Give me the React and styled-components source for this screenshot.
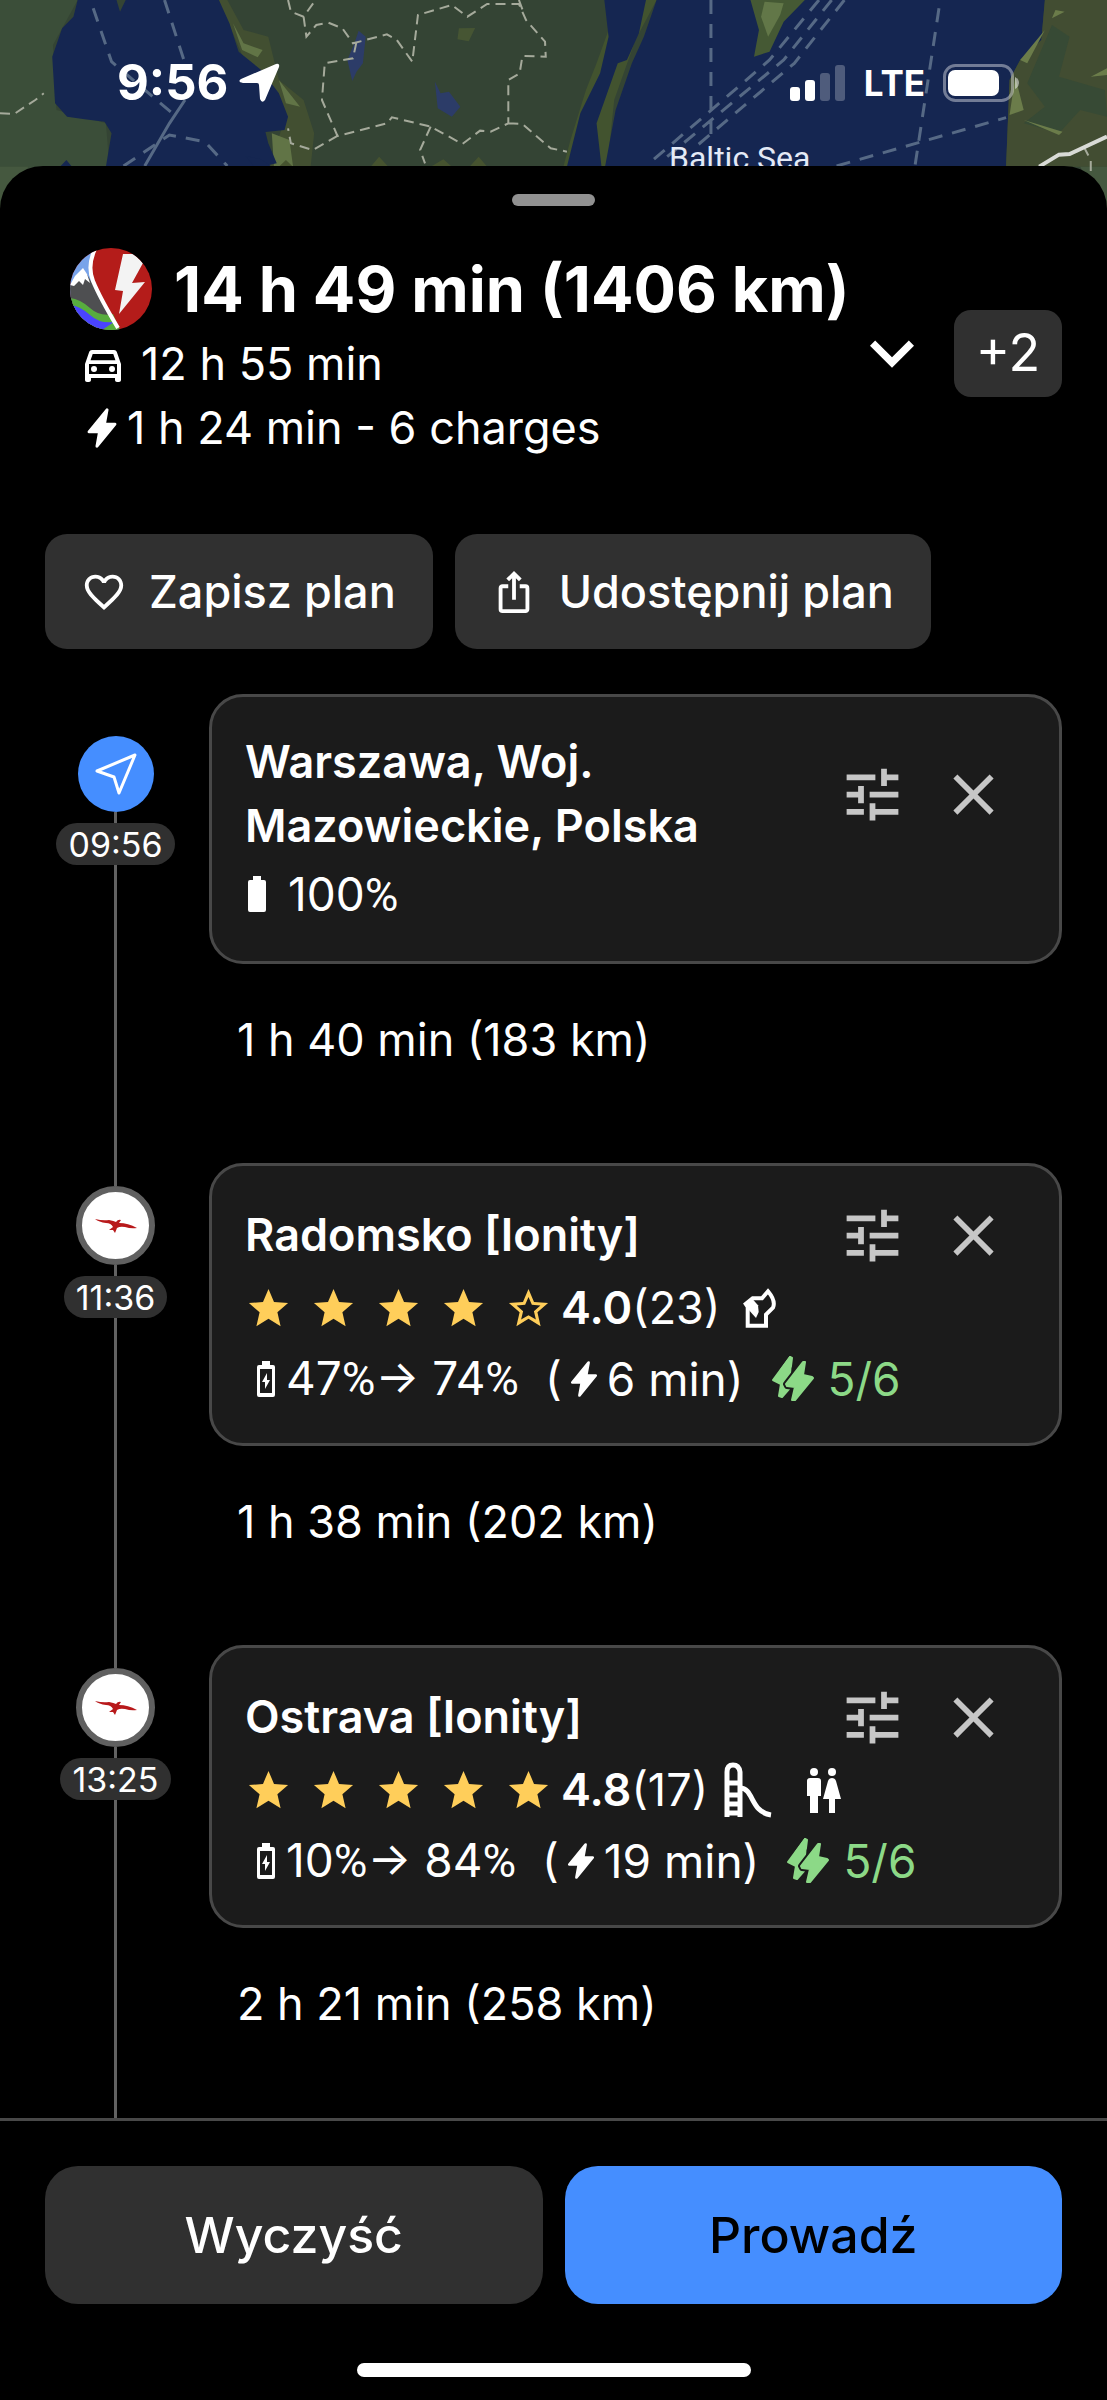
import React from 'react';
import styled, { createGlobalStyle } from 'styled-components';
import {
  MdOutlineDirectionsCar,
  MdExpandMore,
  MdFavoriteBorder,
  MdIosShare,
  MdTune,
  MdClose,
  MdStar,
  MdStarBorder,
} from 'react-icons/md';
import { IoFlash } from 'react-icons/io5';

const GlobalStyle = createGlobalStyle`
  * { box-sizing: border-box; }
  body {
    margin: 0;
    background: #000;
    color: #fff;
    font-family: Inter, "Liberation Sans", sans-serif;
    font-size: 45px;
    line-height: 64px;
  }
  button { font: inherit; color: inherit; border: 0; padding: 0; cursor: pointer; }
  svg { display: block; flex: none; }
`;

const Screen = styled.div`
  display: flex;
  flex-direction: column;
  height: 100vh;
`;

const MapArea = styled.header`
  position: relative;
  flex: none;
  height: 220px;
  background: #344434;
  overflow: hidden;
`;

const MapDrawing = styled.svg`
  width: 100%;
  height: 220px;
`;

const StatusBar = styled.div`
  position: absolute;
  inset: 0 0 auto 0;
  display: flex;
  align-items: center;
  justify-content: space-between;
  height: 166px;
  padding: 0 88px 0 117px;
`;

const StatusGroup = styled.div`
  display: flex;
  align-items: center;
  gap: ${(p) => p.$gap}px;
`;

const Clock = styled.time`
  font-size: 49px;
  font-weight: 700;
`;

const Network = styled.span`
  font-size: 35px;
  font-weight: 700;
`;

const Sheet = styled.main`
  position: relative;
  display: flex;
  flex: 1;
  flex-direction: column;
  min-height: 0;
  margin-top: -54px;
  border-radius: 43px 43px 0 0;
  background: #000;
`;

const Handle = styled.div`
  flex: none;
  width: 83px;
  height: 12px;
  margin: 28px auto 0;
  border-radius: 6px;
  background: #919191;
`;

const Summary = styled.section`
  display: flex;
  align-items: center;
  padding: 40px 45px 0 70px;
`;

const SummaryText = styled.div`
  flex: 1;
  min-width: 0;
`;

const TitleRow = styled.div`
  display: flex;
  align-items: center;
  gap: 22px;
  height: 86px;
`;

const Title = styled.h1`
  margin: 0;
  font-size: 63px;
  font-weight: 700;
  white-space: nowrap;
`;

const SummaryRow = styled.div`
  display: flex;
  align-items: center;
  gap: ${(p) => p.$gap}px;
  padding-left: ${(p) => p.$indent}px;
`;

const ExpandButton = styled.button`
  display: flex;
  flex: none;
  margin-right: 18px;
  background: none;
`;

const MoreButton = styled.button`
  flex: none;
  width: 108px;
  height: 87px;
  border-radius: 17px;
  background: #303030;
  font-size: 52px;
`;

const Actions = styled.div`
  display: flex;
  gap: 22px;
  padding: 74px 45px 45px;
`;

const ActionButton = styled.button`
  display: flex;
  align-items: center;
  gap: 22px;
  height: 115px;
  padding: 0 37px 0 36px;
  border-radius: 22px;
  background: #303030;
  font-weight: 500;
`;

const Timeline = styled.ol`
  flex: 1;
  min-height: 0;
  margin: 0;
  padding: 0 45px;
  overflow-y: auto;
  scrollbar-width: none;
  list-style: none;
`;

const Stop = styled.li`
  display: flex;
  gap: 23px;
`;

const Rail = styled.div`
  display: flex;
  flex-direction: column;
  align-items: center;
  width: 141px;
`;

const RailLine = styled.div`
  width: 3px;
  height: ${(p) => p.$height}px;
  background: ${(p) => (p.$hidden ? 'transparent' : '#626262')};
`;

const RailRest = styled(RailLine)`
  flex: 1;
`;

const StartMarker = styled.div`
  display: grid;
  place-items: center;
  width: 76px;
  height: 76px;
  border-radius: 50%;
  background: #458eff;
`;

const NetworkMarker = styled(StartMarker)`
  width: 79px;
  height: 79px;
  border: 6px solid #606060;
  background: #fff;
`;

const TimePill = styled.time`
  height: 42px;
  padding: 0 12px;
  border-radius: 21px;
  background: #303030;
  font-size: 34px;
  line-height: 44px;
`;

const StopBody = styled.div`
  flex: 1;
`;

const Card = styled.article`
  padding: 33px 51px 31px 33px;
  border: 3px solid #484848;
  border-radius: 34px;
  background: #1b1b1b;
`;

const CardHead = styled.div`
  display: flex;
  align-items: center;
  min-height: 72px;
`;

const CardTitle = styled.h2`
  flex: 1;
  max-width: 560px;
  margin: 0 auto 0 0;
  font-size: 45px;
  font-weight: 600;
`;

const CardTools = styled.div`
  display: flex;
  gap: 32px;
  color: #c6c6c6;
`;

const ToolButton = styled.button`
  display: flex;
  background: none;
`;

const BatteryRow = styled.div`
  display: flex;
  align-items: center;
  gap: 22px;
  height: 72px;
  padding-left: 3px;
  font-size: 46px;
`;

const RatingRow = styled.div`
  display: flex;
  align-items: center;
  height: 74px;
`;

const Stars = styled.div`
  display: flex;
  gap: 18px;
  margin-right: 9px;
  color: #ffce5a;
`;

const Score = styled.strong`
  font-weight: 600;
`;

const Amenities = styled.div`
  display: flex;
  align-items: center;
  gap: 24px;
  padding-left: 14px;
`;

const ChargeRow = styled.div`
  display: flex;
  align-items: center;
  height: 67px;
  padding-left: 12px;
  font-size: 46px;
  white-space: pre;
`;

const ChargeRange = styled.span`
  padding: 0 3px 0 11px;
`;

const ChargeTime = styled.span`
  padding-left: 4px;
`;

const PercentSign = styled.span`
  font-family: Roboto, sans-serif;
`;

const Availability = styled.span`
  display: flex;
  align-items: center;
  gap: 14px;
  margin-left: 28px;
  color: #8cd987;
`;

const Leg = styled.p`
  margin: 0;
  padding: 44px 0 91px 28px;
`;

const Footer = styled.footer`
  display: grid;
  grid-template-columns: 1fr 1fr;
  gap: 45px 22px;
  flex: none;
  padding: 45px 45px 23px;
  border-top: 3px solid #484848;
`;

const FooterButton = styled.button`
  height: 138px;
  border-radius: 33px;
  background: ${(p) => (p.$primary ? '#458eff' : '#303030')};
  color: ${(p) => (p.$primary ? '#000' : '#fff')};
  font-size: 50px;
  font-weight: 500;
`;

const HomeIndicator = styled.div`
  grid-column: 1 / -1;
  justify-self: center;
  width: 394px;
  height: 14px;
  margin-top: 14px;
  border-radius: 7px;
  background: #fff;
`;

function SeaMap() {
  return (
    <MapDrawing viewBox="0 0 1107 220" preserveAspectRatio="none" aria-hidden="true">
      <g transform="scale(.706 .3333)">
        <rect width="1568" height="660" fill="#344434" />
        <path d="M0 0H110L75 135 80 330 150 370 155 500 0 660Z" fill="#3b4e39" />
        <path d="M310 0H322L345 90 380 110 395 240 430 300 445 400 440 500H380L405 350 350 200Z" fill="#424f31" />
        <path d="M330 70L345 130 372 150 365 172 343 150ZM395 240L425 320 405 310ZM385 400L410 420 415 498H388Z" fill="#617446" />
        <path d="M110 0H310L325 70 338 155 370 210 395 280 408 350 403 390 376 396 380 430 392 490 370 500H150L158 400 148 365 120 358 95 350 78 310 74 170 88 85 104 50Z" fill="#152651" />
        <path d="M165 0H178L170 35Z" fill="#344434" />
        <path d="M85 500L94 480 102 500ZM348 468L370 478 385 500H360Z" fill="#152651" />
        <path d="M508 92L518 110 514 190 505 215 499 243 492 180 502 130ZM616 245L624 280 636 275 652 320 640 350 620 325Z" fill="#2c3c68" />
        <path d="M650 85L673 84 664 124 648 118Z" fill="#465533" />
        <path d="M845 190L830 270 808 420 798 500H860L870 300 900 120 930 0H858L862 90Z" fill="#42532f" />
        <path d="M856 0H915L905 100 888 180 875 190 845 370 852 500H803L822 340 850 220 862 110Z" fill="#152651" />
        <path d="M930 0H1480L1475 120 1445 180 1430 240 1425 500H857L872 330 895 190 912 110Z" fill="#152651" />
        <path d="M1063 0H1140L1110 65 1090 155 1068 170 1075 90Z" fill="#455934" />
        <path d="M1083 5L1110 10 1105 45 1088 110 1078 50Z" fill="#627748" />
        <path d="M1480 0H1568V500H1425L1430 240 1445 180 1475 120Z" fill="#424d32" />
        <path d="M1490 75L1515 110 1500 230 1565 270 1568 350 1530 330 1500 400 1450 370 1480 320 1455 250Z" fill="#374a35" />
        <path d="M1495 30L1508 35 1490 55ZM1480 90L1455 190 1445 180ZM1438 230L1450 330 1430 345ZM1450 360L1505 395 1500 405ZM1545 230L1568 205V225Z" fill="#6b7c4a" />
        <path d="M395 500L405 480 415 500ZM525 500L537 470 550 500ZM610 500L628 478 640 500ZM665 500L678 470 690 500Z" fill="#46532f" />
        <path d="M0 500H40L0 660ZM1530 500H1568V660Z" fill="#45583f" />
        <g fill="none" stroke="#a5aa9b" strokeWidth="2" strokeDasharray="10 6">
          <path vectorEffect="non-scaling-stroke" d="M408 0L412 35 430 50 447 0M430 50L434 110 448 75 465 68 485 85 500 130 548 103 562 120 584 185 592 45 640 15 662 50 690 12 735 12 745 60 772 125 773 170 740 168 736 220 720 240 720 370 695 395 680 392 655 432 610 380 555 352 548 370 478 408 456 300 460 190 500 175 505 125M735 0L742 40M720 370L740 372 780 445 803 455M478 408L443 450 412 430 408 385M610 380L595 450 602 490M0 340L20 342 50 300 62 280" />
          <path vectorEffect="non-scaling-stroke" d="M1535 440L1545 480 1545 560" />
        </g>
        <g fill="none" stroke="#566985" strokeWidth="3" strokeDasharray="14 10">
          <path vectorEffect="non-scaling-stroke" d="M132 25L158 185 247 345 M233 0L262 190M175 498L240 405 290 425 322 498M1007 0V430M1160 0L1090 180 925 480M1178 0L1110 180 945 470M1196 0L1125 190 980 450M1330 25L1296 498M1185 498L1425 353" />
          <path vectorEffect="non-scaling-stroke" strokeDasharray="none" d="M262 300L240 370 205 498" />
        </g>
        <path vectorEffect="non-scaling-stroke" d="M1472 500L1500 464 1515 462 1568 410" fill="none" stroke="#d8dad6" strokeWidth="4" />
      </g>
      <text x="669" y="169" fill="#e4eaf6" fontFamily="Roboto, sans-serif" fontSize="32">Baltic Sea</text>
    </MapDrawing>
  );
}

function LocationArrow() {
  return (
    <svg width="42" height="40" viewBox="0 0 42 40" aria-hidden="true">
      <path d="M38 1Q42 0 41 4L27 37Q24 41 22 36L21 22Q21 20 19 20L5 20Q-1 19 3 16Z" fill="#fff" />
    </svg>
  );
}

function Signal() {
  return (
    <svg width="56" height="36" viewBox="0 0 56 36" aria-label="Signal">
      <g fill="#fff">
        <rect x="0" y="22" width="10" height="14" rx="3" />
        <rect x="15" y="15" width="10" height="21" rx="3" />
        <rect x="30" y="8" width="10" height="28" rx="3" opacity=".25" />
        <rect x="45" y="0" width="10" height="36" rx="3" opacity=".25" />
      </g>
    </svg>
  );
}

function PhoneBattery() {
  return (
    <svg width="76" height="38" viewBox="0 0 76 38" aria-label="Battery">
      <rect x="1.5" y="1.5" width="68" height="35" rx="11" fill="none" stroke="#fff" strokeOpacity=".4" strokeWidth="3" />
      <rect x="5" y="6" width="51" height="26" rx="7" fill="#fff" />
      <path d="M72 13Q76 15 76 19T72 25Z" fill="#fff" opacity=".5" />
    </svg>
  );
}

function Logo() {
  return (
    <svg width="82" height="82" viewBox="0 0 82 82" aria-hidden="true">
      <clipPath id="logoClip"><circle cx="41" cy="41" r="41" /></clipPath>
      <g clipPath="url(#logoClip)">
        <rect width="82" height="82" fill="#b41c1a" />
        <path d="M0 0H25L19 20 22 33 50 82H0Z" fill="#78a3ea" />
        <path d="M0 37L13 21 18 28 50 82H0Z" fill="#4e4f51" />
        <path d="M0 37L5 28 13 20 17 26 20 35 15 31 13 37 9 33 4 38Z" fill="#fff" />
        <path d="M0 50Q10 51 20 60T43 66L50 82H0Z" fill="#58ad3e" />
        <path d="M0 57Q10 58 20 67T44 74L32 82H0Z" fill="#4a43ff" />
        <path d="M33 82Q40 80 45 76L48 82Z" fill="#58ad3e" />
        <path d="M25 1Q17 18 23 33 30 50 48 80" fill="none" stroke="#fff" strokeWidth="4" />
        <path d="M53 6H64L73 15 62 35 75 34 49 66 53 43 45 42Z" fill="#f3f3f3" />
      </g>
    </svg>
  );
}

function SendIcon() {
  return (
    <svg width="44" height="44" viewBox="0 0 44 44" aria-hidden="true">
      <path d="M41 3L25 41 20 25 3 19Z" fill="none" stroke="#fff" strokeWidth="3" strokeLinejoin="round" />
    </svg>
  );
}

function BirdIcon() {
  return (
    <svg width="44" height="16" viewBox="0 0 44 16" aria-hidden="true">
      <path d="M1 1Q9 3 15 2 20 3 22 4 24 1 27 2L25 5Q34 5 43 10 37 11 31 9 26 8 23 10L21 15 19 12 15 12 19 9Q17 5 12 5 5 4 1 1Z" fill="#b8191b" />
    </svg>
  );
}

function FullBatteryIcon() {
  return (
    <svg width="18" height="36" viewBox="0 0 18 36" aria-hidden="true">
      <path d="M5 0H13V4H16Q18 4 18 6V34Q18 36 16 36H2Q0 36 0 34V6Q0 4 2 4H5Z" fill="#fff" />
    </svg>
  );
}

function ChargeBatteryIcon() {
  return (
    <svg width="18" height="36" viewBox="0 0 18 36" aria-hidden="true">
      <path d="M5 0H13V4H16Q18 4 18 6V34Q18 36 16 36H2Q0 36 0 34V6Q0 4 2 4H5ZM3 8V32H15V8ZM10 12V19H13L8 28V21H5Z" fill="#fff" fillRule="evenodd" />
    </svg>
  );
}

function DoubleBolt() {
  return (
    <svg width="42" height="46" viewBox="0 0 42 46" aria-hidden="true">
      <g fill="#8cd987" stroke="#8cd987" strokeWidth="2" strokeLinejoin="round">
        <path d="M18 1L1 24 9 28 7 40 10 41 17 33 19 4Z" />
        <path d="M31 6L14 28 15 30 23 31 20 44 23 44 41 22 40 21 31 19 33 6Z" stroke="#1b1b1b" strokeWidth="6" />
        <path d="M18 1L8 15 14 19 19 10 20 2Z" />
        <path d="M31 6L14 28 15 30 23 31 20 44 23 44 41 22 40 21 31 19 33 6Z" />
      </g>
    </svg>
  );
}

function FoodIcon() {
  return (
    <svg width="52" height="48" viewBox="0 0 52 48" aria-hidden="true">
      <path d="M13.7 41.7V23L11.7 20 18.7 14.3H28L34 7.3Q42 17 39 23.7L32 30.7V41.7Z" fill="none" stroke="#fff" strokeWidth="4" />
      <path d="M18.7 15.3L24 21.3 24.7 28 22 34 15.7 27 11.7 20.7Z" fill="#fff" />
    </svg>
  );
}

function SlideIcon() {
  return (
    <svg width="52" height="56" viewBox="0 0 52 56" aria-hidden="true">
      <path d="M5 55V10Q5 3 11 3T18 10V55M5 21H18M5 33H18M5 42H18M5 51H18M18 26C32 26 28 50 49 53" fill="none" stroke="#fff" strokeWidth="5" />
    </svg>
  );
}

function RestroomIcon() {
  return (
    <svg width="52" height="48" viewBox="-2 0 52 48" aria-hidden="true">
      <g fill="#fff">
        <circle cx="14" cy="6" r="4" />
        <circle cx="32" cy="6" r="4" />
        <path d="M10 12H18Q21 12 21 15V30H18V47H10V30H7V15Q7 12 10 12ZM32 12Q35 12 36 15L41 33H35V47H29V33H23L28 15Q29 12 32 12Z" />
      </g>
    </svg>
  );
}

const AMENITY_ICONS = { food: FoodIcon, playground: SlideIcon, restroom: RestroomIcon };

const STOPS = [
  { time: '09:56', name: 'Warszawa, Woj. Mazowieckie, Polska', battery: 100, leg: '1 h 40 min (183 km)' },
  {
    time: '11:36', name: 'Radomsko [Ionity]', score: 4.0, reviews: 23, amenities: ['food'],
    from: 47, to: 74, duration: '6 min', free: '5/6', leg: '1 h 38 min (202 km)',
  },
  {
    time: '13:25', name: 'Ostrava [Ionity]', score: 4.8, reviews: 17, amenities: ['playground', 'restroom'],
    from: 10, to: 84, duration: '19 min', free: '5/6', leg: '2 h 21 min (258 km)',
  },
];

function Percent({ value }) {
  return <>{value}<PercentSign>%</PercentSign></>;
}

function ChargerDetails({ stop }) {
  return (
    <>
      <RatingRow>
        <Stars>
          {[1, 2, 3, 4, 5].map((n) =>
            n <= Math.round(stop.score) ? <MdStar key={n} size={47} /> : <MdStarBorder key={n} size={47} />
          )}
        </Stars>
        <Score>{stop.score.toFixed(1)}</Score>
        <span>({stop.reviews})</span>
        <Amenities>
          {stop.amenities.map((name) => {
            const Icon = AMENITY_ICONS[name];
            return <Icon key={name} />;
          })}
        </Amenities>
      </RatingRow>
      <ChargeRow>
        <ChargeBatteryIcon />
        <ChargeRange>
          <Percent value={stop.from} />→ <Percent value={stop.to} />{'  '}(
        </ChargeRange>
        <IoFlash size={38} />
        <ChargeTime>{stop.duration})</ChargeTime>
        <Availability><DoubleBolt />{stop.free}</Availability>
      </ChargeRow>
    </>
  );
}

function StopItem({ stop, first }) {
  return (
    <Stop>
      <Rail>
        <RailLine $height={first ? 42 : 23} $hidden={first} />
        {first ? <StartMarker><SendIcon /></StartMarker> : <NetworkMarker><BirdIcon /></NetworkMarker>}
        <RailLine $height={11} />
        <TimePill>{stop.time}</TimePill>
        <RailRest />
      </Rail>
      <StopBody>
        <Card>
          <CardHead>
            <CardTitle>{stop.name}</CardTitle>
            <CardTools>
              <ToolButton aria-label="Ustawienia"><MdTune size={69} /></ToolButton>
              <ToolButton aria-label="Usuń"><MdClose size={69} /></ToolButton>
            </CardTools>
          </CardHead>
          {stop.battery ? (
            <BatteryRow><FullBatteryIcon /><span><Percent value={stop.battery} /></span></BatteryRow>
          ) : (
            <ChargerDetails stop={stop} />
          )}
        </Card>
        <Leg>{stop.leg}</Leg>
      </StopBody>
    </Stop>
  );
}

export default function App() {
  return (
    <Screen>
      <GlobalStyle />
      <MapArea>
        <SeaMap />
        <StatusBar>
          <StatusGroup $gap={10}>
            <Clock>9:56</Clock>
            <LocationArrow />
          </StatusGroup>
          <StatusGroup $gap={18}>
            <Signal />
            <Network>LTE</Network>
            <PhoneBattery />
          </StatusGroup>
        </StatusBar>
      </MapArea>
      <Sheet>
        <Handle />
        <Summary>
          <SummaryText>
            <TitleRow>
              <Logo />
              <Title>14 h 49 min (1406 km)</Title>
            </TitleRow>
            <SummaryRow $gap={14} $indent={9}>
              <MdOutlineDirectionsCar size={48} />
              12 h 55 min
            </SummaryRow>
            <SummaryRow $gap={4} $indent={11}>
              <IoFlash size={42} />
              1 h 24 min - 6 charges
            </SummaryRow>
          </SummaryText>
          <ExpandButton aria-label="Rozwiń"><MdExpandMore size={88} /></ExpandButton>
          <MoreButton>+2</MoreButton>
        </Summary>
        <Actions>
          <ActionButton><MdFavoriteBorder size={46} />Zapisz plan</ActionButton>
          <ActionButton><MdIosShare size={46} />Udostępnij plan</ActionButton>
        </Actions>
        <Timeline>
          {STOPS.map((stop, i) => <StopItem key={stop.time} stop={stop} first={i === 0} />)}
        </Timeline>
        <Footer>
          <FooterButton>Wyczyść</FooterButton>
          <FooterButton $primary>Prowadź</FooterButton>
          <HomeIndicator />
        </Footer>
      </Sheet>
    </Screen>
  );
}
